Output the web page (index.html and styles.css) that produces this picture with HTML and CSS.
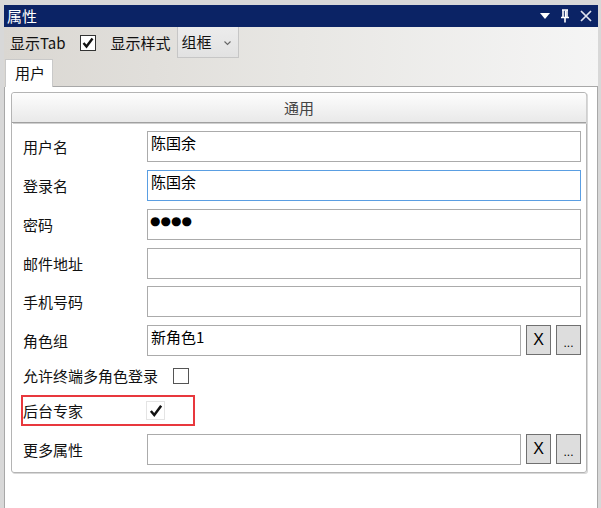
FILE: index.html
```html
<!DOCTYPE html>
<html>
<head>
<meta charset="utf-8">
<link rel="stylesheet" href="styles.css">
</head>
<body>
<div class="pane">
  <div class="titlebar">
    <span class="title">属性</span>
    <div class="title-icons">
      <svg width="10" height="8" viewBox="0 0 10 8"><path d="M0 1 L10 1 L5 7 Z" fill="#fff"/></svg>
      <svg width="12" height="14" viewBox="0 0 12 14"><path d="M3 1 H9 M4 1 V8 M8 1 V8 M2 8.5 H10 M6 8.5 V13.5" stroke="#fff" stroke-width="1.6" fill="none"/><path d="M6.5 1.5 V8" stroke="#fff" stroke-width="1.4"/></svg>
      <svg width="12" height="12" viewBox="0 0 12 12"><path d="M1 1 L11 11 M11 1 L1 11" stroke="#dfe3ee" stroke-width="1.7"/></svg>
    </div>
  </div>
  <div class="toolbar">
    <span class="tool-label">显示Tab</span>
    <span class="check dark"><svg width="14" height="14" viewBox="0 0 14 14"><path d="M2.5 7 L5.5 10.5 L11.5 2.5" stroke="#111" stroke-width="2.4" fill="none"/></svg></span>
    <span class="tool-label style-label">显示样式</span>
    <div class="combo"><span>组框</span><svg width="7" height="5" viewBox="0 0 7 5"><path d="M0.5 0.5 L3.5 3.5 L6.5 0.5" stroke="#666" stroke-width="1.1" fill="none"/></svg></div>
  </div>
  <div class="tabstrip">
    <div class="tab">用户</div>
    <div class="tab-rest"></div>
  </div>
  <div class="content">
    <div class="group">
      <div class="group-head">通用</div>
      <div class="rows">
        <div class="row first">
          <span class="label">用户名</span>
          <div class="field">陈国余</div>
        </div>
        <div class="row">
          <span class="label">登录名</span>
          <div class="field focus">陈国余</div>
        </div>
        <div class="row">
          <span class="label">密码</span>
          <div class="field pwd">●●●●</div>
        </div>
        <div class="row">
          <span class="label">邮件地址</span>
          <div class="field"></div>
        </div>
        <div class="row short">
          <span class="label">手机号码</span>
          <div class="field"></div>
        </div>
        <div class="row">
          <span class="label">角色组</span>
          <div class="field">新角色1</div>
          <button class="btn x">X</button>
          <button class="btn dots">...</button>
        </div>
        <div class="row tight">
          <span class="label-auto">允许终端多角色登录</span>
          <span class="check gray"></span>
        </div>
        <div class="row tight">
          <div class="highlight">
            <span class="label">后台专家</span>
            <span class="check light"><svg width="16" height="16" viewBox="0 0 14 14"><path d="M2.5 7 L5.5 10.5 L11.5 2.5" stroke="#111" stroke-width="2.2" fill="none"/></svg></span>
          </div>
        </div>
        <div class="row last">
          <span class="label">更多属性</span>
          <div class="field"></div>
          <button class="btn x">X</button>
          <button class="btn dots">...</button>
        </div>
      </div>
    </div>
  </div>
</div>
</body>
</html>
```
FILE: styles.css
```css
html, body {
  margin: 0;
  padding: 0;
}
body {
  width: 601px;
  height: 508px;
  overflow: hidden;
  background: #d8d8d8;
  font-family: "Noto Sans CJK SC", "Noto Sans", sans-serif;
  font-size: 15px;
  color: #111;
}
.pane {
  margin: 5px 3px 0 4px;
  height: 503px;
  display: flex;
  flex-direction: column;
  background: #fff;
}
.titlebar {
  height: 22px;
  background: #0b2365;
  display: flex;
  align-items: center;
  justify-content: space-between;
  color: #fff;
  flex: none;
}
.title {
  margin-left: 3px;
  font-size: 15px;
  line-height: 20px;
}
.title-icons {
  display: flex;
  align-items: center;
  gap: 9px;
  margin-right: 6px;
}
.title-icons svg {
  display: block;
}
.toolbar, .tabstrip {
  background: linear-gradient(to right, #dad7d2, #e8e7e4 50%, #f5f5f5);
}
.toolbar {
  height: 31px;
  display: flex;
  align-items: center;
  flex: none;
}
.tool-label {
  margin-left: 6px;
  line-height: 20px;
}
.style-label {
  margin-left: 15px;
}
.check {
  width: 14px;
  height: 14px;
  border: 1px solid #333;
  background: #fff;
  display: inline-flex;
  align-items: center;
  justify-content: center;
  flex: none;
}
.check svg {
  display: block;
}
.toolbar .check {
  margin-left: 14px;
  margin-top: 1px;
}
.check.gray {
  border-color: #555;
  margin-left: 15px;
}
.check.light {
  border-color: #e4e4e4;
  margin-left: -1px;
  width: 17px;
  height: 17px;
}
.combo {
  margin-left: 6px;
  align-self: stretch;
  width: 62px;
  border: 1px solid #c6c6c6;
  border-top: none;
  background: linear-gradient(#ececec, #e2e2e2);
  display: flex;
  align-items: center;
  padding-left: 4px;
  box-sizing: border-box;
}
.combo span {
  line-height: 20px;
}
.combo svg {
  margin-left: 12px;
  margin-top: 2px;
}
.tabstrip {
  height: 29px;
  display: flex;
  align-items: flex-end;
  flex: none;
}
.tab {
  width: 48px;
  height: 28px;
  box-sizing: border-box;
  margin-left: 1px;
  background: #fff;
  border: 1px solid #c9c9c9;
  border-bottom: none;
  line-height: 26px;
  padding-left: 9px;
}
.tab-rest {
  flex: 1;
  height: 1px;
  background: #a8a8a8;
}
.content {
  flex: 1;
  border-left: 1px solid #a8a8a8;
  border-right: 1px solid #a8a8a8;
  padding: 5px 10px 0 6px;
}
.group {
  border: 1px solid #b4b4b4;
  border-radius: 3px;
  box-shadow: 1px 1px 0 #d8d8d8;
}
.group-head {
  height: 29px;
  border-bottom: 1px solid #a0a0a0;
  background: linear-gradient(#fdfdfd, #e9e9e9);
  text-align: center;
  line-height: 29px;
  color: #444;
  border-radius: 3px 3px 0 0;
  box-shadow: 1px 1px 0 #cfcfcf;
}
.rows {
  padding: 0 5px 7px 11px;
}
.row {
  display: flex;
  align-items: center;
  height: 31px;
  margin-top: 8px;
}
.row.first {
  margin-top: 8px;
}
.row.short {
  margin-top: 7px;
}
.row.tight {
  height: 31px;
  margin-top: 4px;
}
.row.last {
  height: 31px;
  margin-top: 8px;
}
.label {
  width: 124px;
  flex: none;
  line-height: 20px;
}
.label-auto {
  line-height: 20px;
}
.field {
  flex: 1;
  align-self: stretch;
  border: 1px solid #ababab;
  background: #fff;
  padding: 1px 3px;
  line-height: 20px;
  color: #000;
}
.field.focus {
  border-color: #5a9ee2;
}
.field.pwd {
  font-family: "DejaVu Sans", sans-serif;
  font-size: 12px;
  letter-spacing: 0;
  line-height: 21px;
  padding-left: 2px;
}
.btn {
  flex: none;
  align-self: stretch;
  width: 25px;
  margin: 0 0 1px 5px;
  padding: 0;
  border: 1px solid #707070;
  background: #dddddd;
  font-family: "Liberation Sans", sans-serif;
  color: #000;
}
.btn.x {
  font-size: 16px;
}
.btn.dots {
  font-size: 12px;
  padding-top: 6px;
}
.highlight {
  margin-left: -2px;
  width: 174px;
  height: 31px;
  box-sizing: border-box;
  border: 2px solid #e8383d;
  display: flex;
  align-items: center;
}
```
